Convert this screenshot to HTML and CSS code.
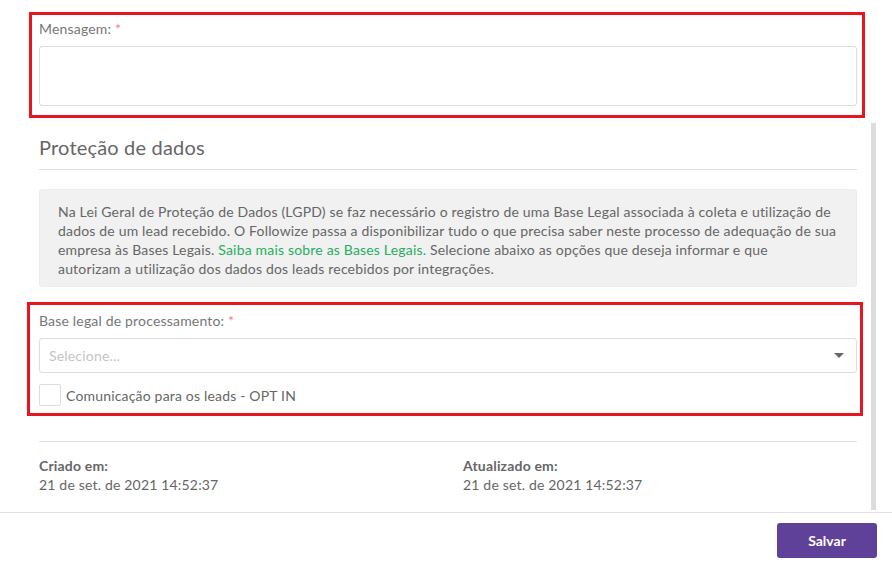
FILE: index.html
```html
<!DOCTYPE html>
<html lang="pt-BR">
<head>
    <meta charset="UTF-8">
    <meta name="viewport" content="width=device-width, initial-scale=1.0">
    <title>Editar integração</title>
    <link rel="stylesheet" href="styles.css">
</head>
<body>
    <div class="modal">
        <div class="modal-body">
            <!-- Mensagem -->
            <div class="highlight highlight-top">
                <label class="field-label">Mensagem: <span class="required">*</span></label>
                <textarea class="field-input field-textarea"></textarea>
            </div>

            <!-- Proteção de dados -->
            <h3 class="section-title">Proteção de dados</h3>
            <div class="info-box">
                Na Lei Geral de Proteção de Dados (LGPD) se faz necessário o registro de uma Base Legal associada à coleta e utilização de dados de um lead recebido. O Followize passa a disponibilizar tudo o que precisa saber neste processo de adequação de sua empresa às Bases Legais. <a href="#" class="info-link">Saiba mais sobre as Bases Legais.</a> Selecione abaixo as opções que deseja informar e que autorizam&nbsp;a utilização dos dados dos leads recebidos por integrações.
            </div>

            <div class="highlight highlight-bottom">
                <label class="field-label">Base legal de processamento: <span class="required">*</span></label>
                <div class="select">
                    <span class="select-placeholder">Selecione...</span>
                    <span class="select-caret"></span>
                </div>
                <label class="checkbox">
                    <span class="checkbox-box"></span>
                    Comunicação para os leads - OPT IN
                </label>
            </div>

            <div class="dates">
                <div>
                    <div class="date-title">Criado em:</div>
                    <div class="date-value">21 de set. de 2021 14:52:37</div>
                </div>
                <div>
                    <div class="date-title">Atualizado em:</div>
                    <div class="date-value">21 de set. de 2021 14:52:37</div>
                </div>
            </div>

            <div class="scroll-thumb"></div>
        </div>
        <div class="modal-footer">
            <button class="btn-save">Salvar</button>
        </div>
    </div>
</body>
</html>
```

FILE: styles.css
```css
body {
    margin: 0;
    font-family: Lato, "Open Sans", sans-serif;
    font-size: 14px;
    letter-spacing: 0.18px;
    color: #666;
    background: #fff;
}
.modal {
    width: 892px;
    height: 568px;
    overflow: hidden;
}
.modal-body {
    position: relative;
    height: 513px;
    box-sizing: border-box;
    padding: 12px 35px 0 39px;
    border-bottom: 1px solid #e2e2e2;
    overflow: hidden;
}
.scroll-thumb {
    position: absolute;
    top: 123px;
    left: 871px;
    width: 5px;
    height: 387px;
    background: #dcdcdc;
}
.highlight {
    border: 3px solid #e8141e;
}
.highlight-top {
    margin: 0 -8px 0 -10px;
    padding: 4px 5px 9px 7px;
}
.highlight-bottom {
    margin: 15px -6px 0 -12px;
    padding: 6px 3px 7px 9px;
}
.field-label {
    display: block;
    line-height: 19px;
    color: #777;
    margin-bottom: 8px;
}
.required {
    color: #f08080;
}
.field-input {
    display: block;
    width: 100%;
    box-sizing: border-box;
    border: 1px solid #ddd;
    border-radius: 3px;
    background: #fff;
}
.field-textarea {
    height: 60px;
    resize: none;
    margin: 0;
}
.section-title {
    font-size: 20px;
    font-weight: normal;
    line-height: 24px;
    color: #666;
    margin: 17px 0 0;
    padding-bottom: 10px;
    border-bottom: 1px solid #ddd;
}
.info-box {
    margin-top: 19px;
    background: #f1f1f1;
    border: 1px solid #ececec;
    border-radius: 3px;
    padding: 12px 18px 8px;
    line-height: 19px;
    color: #666;
}
.info-link {
    color: #27ae60;
    text-decoration: none;
}
.select {
    display: flex;
    align-items: center;
    justify-content: space-between;
    height: 35px;
    box-sizing: border-box;
    border: 1px solid #ddd;
    border-radius: 3px;
    padding: 0 12px 0 9px;
}
.select-placeholder {
    color: #c4c4c4;
}
.select-caret {
    width: 0;
    height: 0;
    border-left: 5px solid transparent;
    border-right: 5px solid transparent;
    border-top: 5px solid #666;
}
.checkbox {
    display: flex;
    align-items: center;
    gap: 5px;
    margin-top: 11px;
    color: #666;
}
.checkbox-box {
    width: 20px;
    height: 20px;
    border: 1px solid #ddd;
    border-radius: 2px;
}
.dates {
    display: grid;
    grid-template-columns: 1fr 1fr;
    column-gap: 30px;
    margin-top: 25px;
    padding-top: 14px;
    border-top: 1px solid #e2e2e2;
    line-height: 19px;
}
.date-title {
    font-weight: bold;
    color: #666;
}
.date-value {
    color: #666;
}
.modal-footer {
    display: flex;
    justify-content: flex-end;
    padding: 10px 15px 0 0;
}
.btn-save {
    width: 100px;
    height: 35px;
    border: none;
    border-radius: 3px;
    background: #5f4199;
    color: #fff;
    font-family: Lato, "Open Sans", sans-serif;
    font-size: 14px;
    font-weight: bold;
    cursor: pointer;
}
```
